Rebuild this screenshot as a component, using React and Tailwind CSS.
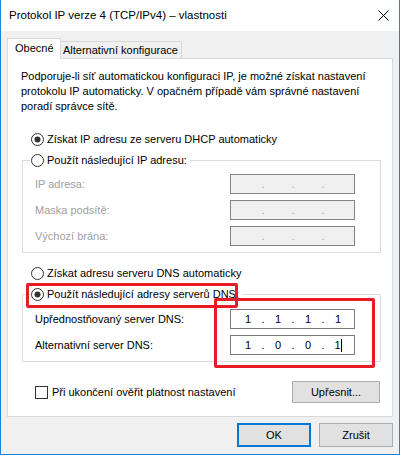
import React from "react";

const Radio = ({ checked }) => (
  <svg width="13" height="13" viewBox="0 0 13 13" className="shrink-0">
    <circle cx="6.5" cy="6.5" r="6" fill="#fff" stroke="#333" strokeWidth="1" />
    {checked && <circle cx="6.5" cy="6.5" r="3" fill="#333" />}
  </svg>
);

const IpField = ({ values = ["", "", "", ""], disabled, caret }) => (
  <div
    className={
      "w-[125px] h-[20px] border flex items-center pl-[5px] " +
      (disabled ? "bg-[#f0f0f0] border-[#838383] text-[#a0a0a0]" : "bg-white border-[#7a7a7a] text-black")
    }
  >
    {values.map((v, i) => (
      <React.Fragment key={i}>
        <span className="w-[24px] flex items-center justify-center">
          {v}
          {caret && i === 3 && <span className="inline-block w-px h-[13px] bg-black" />}
        </span>
        {i < 3 && <span className="w-[6px] text-center">.</span>}
      </React.Fragment>
    ))}
  </div>
);

const Row = ({ label, disabled, values, caret }) => (
  <div className="h-[20px] flex items-center justify-between">
    <span className={disabled ? "text-[#a0a0a0]" : "text-black"}>{label}</span>
    <IpField disabled={disabled} values={values} caret={caret} />
  </div>
);

const Group = ({ title, checked, children }) => (
  <fieldset className="ml-[14px] mr-[11px] border border-[#dcdcdc]">
    <legend className="ml-[7px] pl-[1px] pr-[3px] h-[15px] flex items-center gap-[3px]">
      <Radio checked={checked} />
      <span>{title}</span>
    </legend>
    {children}
  </fieldset>
);

export default function App() {
  return (
    <div className="relative w-[400px] h-[455px] border-x border-b border-[#1883d7] bg-[#f0f0f0] flex flex-col text-[11px] leading-[15px] text-black font-['Liberation_Sans',Arial,sans-serif]">
      <div className="h-[31px] bg-white flex items-center justify-between pl-[8px] pr-[10px]">
        <span className="text-[11.5px]">Protokol IP verze 4 (TCP/IPv4) – vlastnosti</span>
        <svg width="11" height="11" viewBox="0 0 11 11">
          <path d="M0.5 0.5 L10.5 10.5 M10.5 0.5 L0.5 10.5" stroke="#000" strokeWidth="1" />
        </svg>
      </div>

      <div className="px-[6px] pt-[7px] flex flex-col">
        <div className="flex items-end h-[20px]">
          <div className="relative z-10 -mb-px w-[54px] h-[21px] bg-white border-x border-t border-[#d9d9d9] pl-[7px] pt-[2px] whitespace-nowrap">
            Obecné
          </div>
          <div className="w-[121px] h-[17px] border-t border-r border-[#d9d9d9] bg-[#f0f0f0] pl-[2px] flex items-center whitespace-nowrap">
            Alternativní konfigurace
          </div>
        </div>

        <div className="h-[359px] bg-white border border-[#d9d9d9] flex flex-col">
          <p className="pl-[13px] pt-[10px] whitespace-nowrap">
            Podporuje-li síť automatickou konfiguraci IP, je možné získat nastavení
            <br />
            protokolu IP automaticky. V opačném případě vám správné nastavení
            <br />
            poradí správce sítě.
          </p>

          <div className="mt-[18px] pl-[23px] h-[15px] flex items-center gap-[3px]">
            <Radio checked />
            <span>Získat IP adresu ze serveru DHCP automaticky</span>
          </div>

          <div className="mt-[6px]">
            <Group title="Použít následující IP adresu:">
              <div className="pl-[12px] pr-[25px] pt-[6px] pb-[6px] flex flex-col gap-[6px]">
                <Row label="IP adresa:" disabled />
                <Row label="Maska podsítě:" disabled />
                <Row label="Výchozí brána:" disabled />
              </div>
            </Group>
          </div>

          <div className="mt-[13px] pl-[23px] h-[15px] flex items-center gap-[3px]">
            <Radio />
            <span>Získat adresu serveru DNS automaticky</span>
          </div>

          <div className="mt-[6px]">
            <Group title="Použít následující adresy serverů DNS:" checked>
              <div className="pl-[12px] pr-[25px] pt-[7px] pb-[6px] flex flex-col gap-[6px]">
                <Row label="Upřednostňovaný server DNS:" values={["1", "1", "1", "1"]} />
                <Row label="Alternativní server DNS:" values={["1", "0", "0", "1"]} caret />
              </div>
            </Group>
          </div>

          <div className="mt-[19px] h-[22px] flex items-center justify-between pl-[27px] pr-[12px]">
            <div className="flex items-center gap-[4px]">
              <span className="w-[13px] h-[13px] border border-[#333] bg-white" />
              <span>Při ukončení ověřit platnost nastavení</span>
            </div>
            <button className="w-[88px] h-[22px] bg-[#e1e1e1] border border-[#adadad]">Upřesnit...</button>
          </div>
        </div>

        <div className="mt-[6px] flex justify-end gap-[8px]">
          <button className="w-[74px] h-[24px] bg-[#e1e1e1] border-2 border-[#0078d7]">OK</button>
          <button className="w-[74px] h-[24px] bg-[#e1e1e1] border border-[#adadad]">Zrušit</button>
        </div>
      </div>

      <div className="absolute left-[25px] top-[283px] w-[212px] h-[25px] border-[3px] border-[#e81c24] rounded-[2px]" />
      <div className="absolute left-[213px] top-[298px] w-[161px] h-[70px] border-[3px] border-[#e81c24] rounded-[2px]" />
    </div>
  );
}
